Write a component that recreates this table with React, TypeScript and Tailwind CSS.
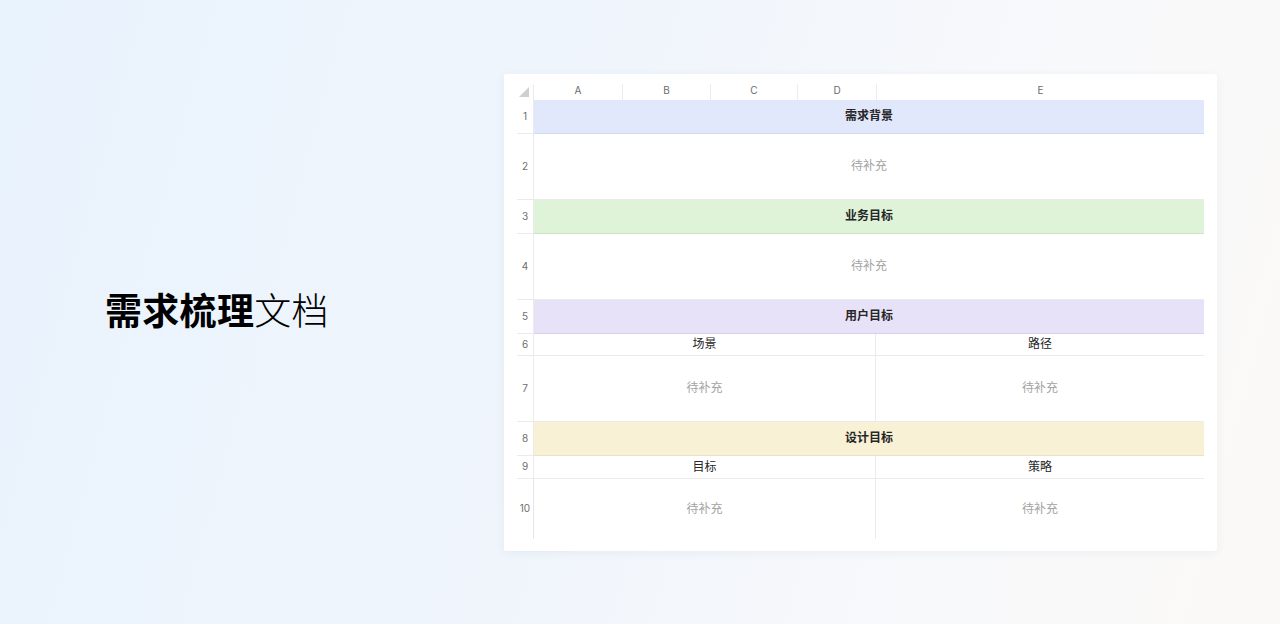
const font = { fontFamily: '"Inter", "Noto Sans CJK SC", sans-serif' }

type Row = {
  n: number
  h: string
  kind: 'section' | 'blank' | 'split-head' | 'split-blank'
  label?: string
  left?: string
  right?: string
  tone?: string
}

const rows: Row[] = [
  { n: 1, h: 'h-[34px]', kind: 'section', label: '需求背景', tone: 'bg-[#e1e8fb] border-[#d2dbf3]' },
  { n: 2, h: 'h-[66px]', kind: 'blank' },
  { n: 3, h: 'h-[34px]', kind: 'section', label: '业务目标', tone: 'bg-[#dff3d9] border-[#cbe6c3]' },
  { n: 4, h: 'h-[66px]', kind: 'blank' },
  { n: 5, h: 'h-[34px]', kind: 'section', label: '用户目标', tone: 'bg-[#e8e2f9] border-[#d8d0f0]' },
  { n: 6, h: 'h-[22px]', kind: 'split-head', left: '场景', right: '路径' },
  { n: 7, h: 'h-[66px]', kind: 'split-blank' },
  { n: 8, h: 'h-[34px]', kind: 'section', label: '设计目标', tone: 'bg-[#f8f1d5] border-[#ece2c0]' },
  { n: 9, h: 'h-[23px]', kind: 'split-head', left: '目标', right: '策略' },
  { n: 10, h: 'h-[60px]', kind: 'split-blank' },
]

function Placeholder() {
  return <span className="text-[12px] text-[#a3a3a3]">待补充</span>
}

function SheetRow({ row, last }: { row: Row; last: boolean }) {
  const line = last ? '' : 'border-b border-[#ebebeb]'
  return (
    <div className={`flex ${row.h}`}>
      <div
        className={`flex w-[17px] shrink-0 items-center justify-center border-r border-[#e6e6e6] text-[10px] text-[#6e6e6e] ${line}`}
      >
        {row.n}
      </div>
      {row.kind === 'section' && (
        <div
          className={`flex flex-1 items-center justify-center border-b text-[12px] font-bold text-[#262626] ${row.tone}`}
        >
          {row.label}
        </div>
      )}
      {row.kind === 'blank' && (
        <div className={`flex flex-1 items-center justify-center ${line}`}>
          <Placeholder />
        </div>
      )}
      {(row.kind === 'split-head' || row.kind === 'split-blank') && (
        <div className={`flex flex-1 ${line}`}>
          <div className="flex w-[342px] items-center justify-center border-r border-[#ebebeb] text-[12px] text-[#262626]">
            {row.kind === 'split-head' ? row.left : <Placeholder />}
          </div>
          <div className="flex flex-1 items-center justify-center text-[12px] text-[#262626]">
            {row.kind === 'split-head' ? row.right : <Placeholder />}
          </div>
        </div>
      )}
    </div>
  )
}

function Sheet() {
  const cols = [
    { k: 'A', w: 'w-[88px]' },
    { k: 'B', w: 'w-[88px]' },
    { k: 'C', w: 'w-[87px]' },
    { k: 'D', w: 'w-[79px]' },
    { k: 'E', w: 'flex-1' },
  ]
  return (
    <div className="w-[713px] shrink-0 rounded-[2px] bg-white px-[13px] pb-[12px] pt-[10px] shadow-[0_2px_10px_rgba(40,60,100,0.06)]">
      <div className="flex h-[16px]">
        <div className="flex w-[17px] shrink-0 items-end justify-end border-r border-[#ececec] pb-[3px] pr-[4px]">
          <svg width="10" height="10" viewBox="0 0 10 10">
            <path d="M10 0 L10 10 L0 10 Z" fill="#cfcfcf" />
          </svg>
        </div>
        {cols.map((c, i) => (
          <div
            key={c.k}
            className={`flex items-start justify-center text-[10px] leading-[12px] text-[#6b6b6b] ${c.w} ${
              i > 0 ? 'border-l border-[#ececec]' : ''
            }`}
          >
            {c.k}
          </div>
        ))}
      </div>
      {rows.map((r, i) => (
        <SheetRow key={r.n} row={r} last={i === rows.length - 1} />
      ))}
    </div>
  )
}

export default function App() {
  return (
    <div
      style={font}
      className="flex h-[624px] w-[1280px] items-center overflow-hidden bg-[linear-gradient(105deg,#e9f3fd_0%,#f0f5fc_45%,#f8f9fb_75%,#fbf9f7_100%)]"
    >
      <div className="w-[504px] shrink-0 pl-[105px]">
        <h1 className="text-[37px] leading-[44px] tracking-[0.3px] text-black">
          <span className="font-bold">需求梳理</span>
          <span className="font-light">文档</span>
        </h1>
      </div>
      <Sheet />
    </div>
  )
}
